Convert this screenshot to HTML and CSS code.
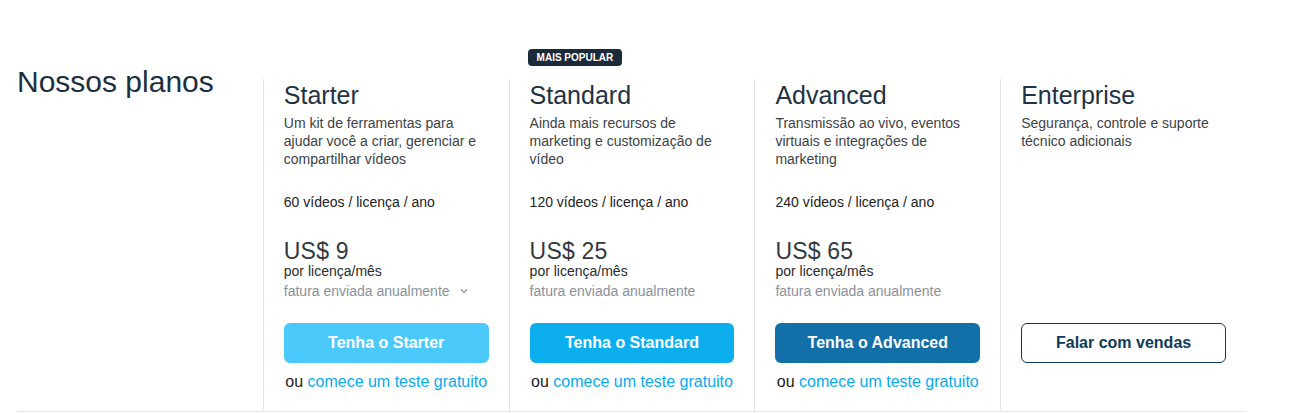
FILE: index.html
```html
<!DOCTYPE html>
<html lang="pt-BR">
<head>
<meta charset="utf-8">
<title>Nossos planos</title>
<link rel="stylesheet" href="styles.css">
</head>
<body>
<section class="plans">
  <div class="plans-grid">
    <div class="plans-intro">
      <h2 class="plans-title">Nossos planos</h2>
    </div>

    <div class="plan">
      <h3 class="plan-name">Starter</h3>
      <p class="plan-desc">Um kit de ferramentas para ajudar você a criar, gerenciar e compartilhar vídeos</p>
      <div class="plan-details">
        <p class="plan-feature">60 vídeos / licença / ano</p>
        <div class="plan-price">US$ 9</div>
        <p class="plan-unit">por licença/mês</p>
        <p class="plan-billing">fatura enviada anualmente
          <svg class="chev" width="8" height="6" viewBox="0 0 8 6"><path d="M1 1.5 L4 4.5 L7 1.5" fill="none" stroke="#8a9199" stroke-width="1.2"/></svg>
        </p>
      </div>
      <a class="btn btn-starter" href="#">Tenha o Starter</a>
      <p class="trial">ou <a href="#">comece um teste gratuito</a></p>
    </div>

    <div class="plan plan-popular">
      <span class="badge">MAIS POPULAR</span>
      <h3 class="plan-name">Standard</h3>
      <p class="plan-desc">Ainda mais recursos de marketing e customização de vídeo</p>
      <div class="plan-details">
        <p class="plan-feature">120 vídeos / licença / ano</p>
        <div class="plan-price">US$ 25</div>
        <p class="plan-unit">por licença/mês</p>
        <p class="plan-billing">fatura enviada anualmente</p>
      </div>
      <a class="btn btn-standard" href="#">Tenha o Standard</a>
      <p class="trial">ou <a href="#">comece um teste gratuito</a></p>
    </div>

    <div class="plan">
      <h3 class="plan-name">Advanced</h3>
      <p class="plan-desc">Transmissão ao vivo, eventos virtuais e integrações de marketing</p>
      <div class="plan-details">
        <p class="plan-feature">240 vídeos / licença / ano</p>
        <div class="plan-price">US$ 65</div>
        <p class="plan-unit">por licença/mês</p>
        <p class="plan-billing">fatura enviada anualmente</p>
      </div>
      <a class="btn btn-advanced" href="#">Tenha o Advanced</a>
      <p class="trial">ou <a href="#">comece um teste gratuito</a></p>
    </div>

    <div class="plan">
      <h3 class="plan-name">Enterprise</h3>
      <p class="plan-desc">Segurança, controle e suporte técnico adicionais</p>
      <div class="plan-details"></div>
      <a class="btn btn-outline" href="#">Falar com vendas</a>
    </div>
  </div>
</section>
</body>
</html>
```

FILE: styles.css
```css
* { box-sizing: border-box; }

html, body {
  margin: 0;
  padding: 0;
  background: #ffffff;
}

body {
  font-family: "Liberation Sans", Arial, sans-serif;
  color: #2b2b2b;
}

.plans {
  padding: 79px 47px 0 17px;
}

.plans-grid {
  display: grid;
  grid-template-columns: repeat(5, 1fr);
  border-bottom: 1px solid #e2e4e7;
}

.plans-title {
  margin: -12px 0 0 0;
  font-size: 30px;
  line-height: 30px;
  font-weight: 400;
  color: #1d2f3f;
}

.plan {
  position: relative;
  display: flex;
  flex-direction: column;
  border-left: 1px solid #e3e3e3;
  padding: 1px 20px 19px 20px;
}

.plan-name {
  margin: 0;
  font-size: 25px;
  line-height: 30px;
  font-weight: 400;
  color: #213243;
}

.plan-desc {
  margin: 4px 0 0 0;
  min-height: 54px;
  font-size: 14px;
  line-height: 18px;
  color: #3c4247;
}

.plan-details {
  min-height: 134px;
}

.plan-feature {
  margin: 25px 0 0 0;
  font-size: 14px;
  line-height: 18px;
  color: #222;
}

.plan-price {
  margin-top: 31px;
  font-size: 23px;
  line-height: 19px;
  color: #33393f;
  letter-spacing: 0.2px;
}

.plan-unit {
  margin: 0;
  font-size: 14px;
  line-height: 20px;
  color: #2b2b2b;
}

.plan-billing {
  margin: 0;
  font-size: 14px;
  line-height: 20px;
  color: #8a9199;
  display: flex;
  align-items: center;
  gap: 10px;
}

.chev {
  display: block;
}

.btn {
  display: flex;
  align-items: center;
  justify-content: center;
  margin-top: 21px;
  height: 40px;
  border-radius: 6px;
  font-size: 16px;
  font-weight: 700;
  text-decoration: none;
  color: #ffffff;
}

.btn-starter { background: #4cc9fb; }
.btn-standard { background: #0caeee; }
.btn-advanced { background: #126fa8; }

.btn-outline {
  background: #ffffff;
  border: 1px solid #0e3b58;
  color: #0e3b58;
}

.trial {
  margin: 9px 0 0 0;
  font-size: 16px;
  line-height: 20px;
  text-align: center;
  color: #222;
}

.trial a {
  color: #0aa9ec;
  text-decoration: none;
}

.badge {
  position: absolute;
  top: -30px;
  left: 18px;
  height: 17px;
  padding: 0 9px;
  border-radius: 4px;
  background: #1b2b3b;
  color: #ffffff;
  font-size: 10px;
  font-weight: 700;
  line-height: 17px;
  white-space: nowrap;
}
```
